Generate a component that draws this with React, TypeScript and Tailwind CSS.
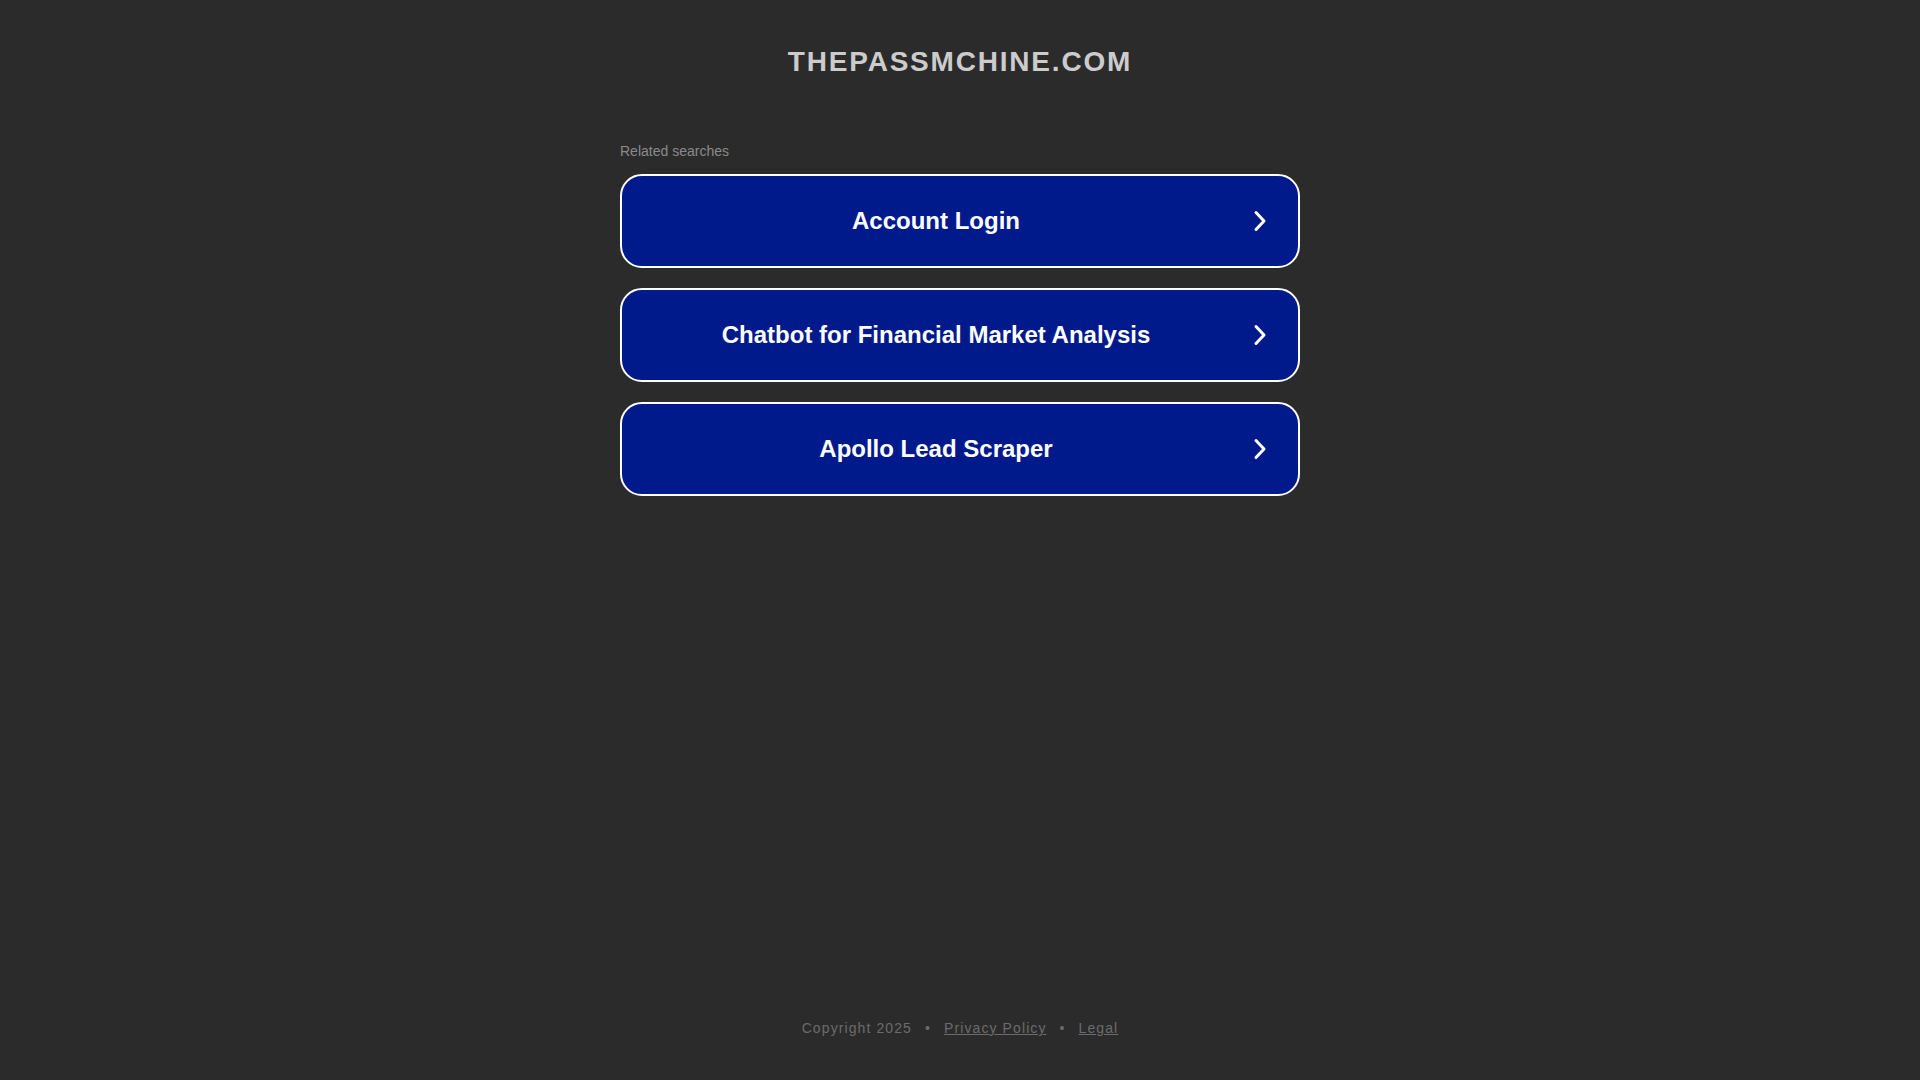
const searches = ["Account Login", "Chatbot for Financial Market Analysis", "Apollo Lead Scraper"];

function Chevron() {
  return (
    <svg width="14" height="22" viewBox="0 0 14 22" fill="none" className="absolute right-[31px] top-1/2 -translate-y-1/2">
      <path d="M3 2.5 L11 11 L3 19.5" stroke="#ffffff" strokeWidth="3" strokeLinecap="round" strokeLinejoin="round" />
    </svg>
  );
}

export default function App() {
  return (
    <div className="min-h-screen bg-[#2b2b2b] flex flex-col items-center font-['Liberation_Sans',Arial,sans-serif]">
      {/* Header */}
      <h1 className="pt-[41px] text-[28px] leading-[42px] font-bold tracking-[1.8px] text-[#cccccc]">
        THEPASSMCHINE.COM
      </h1>

      {/* Related searches */}
      <div className="w-[680px] mt-[58px]">
        <p className="text-[14px] leading-[20px] text-[#8a8a8a]">Related searches</p>
        <div className="mt-[13px] flex flex-col gap-[20px]">
          {searches.map((s) => (
            <a
              key={s}
              href="#"
              className="relative flex items-center justify-center h-[94px] pr-[48px] rounded-[22px] border-2 border-white bg-[#011a8b] text-white text-[24px] font-bold"
            >
              {s}
              <Chevron />
            </a>
          ))}
        </div>
      </div>

      {/* Footer */}
      <footer className="mt-auto pb-[42px] text-[14px] leading-[20px] tracking-[1.1px] text-[#6b6b6b]">
        <span>Copyright 2025</span>
        <span className="mx-[13px]">•</span>
        <a href="#" className="underline">Privacy Policy</a>
        <span className="mx-[13px]">•</span>
        <a href="#" className="underline">Legal</a>
      </footer>
    </div>
  );
}
